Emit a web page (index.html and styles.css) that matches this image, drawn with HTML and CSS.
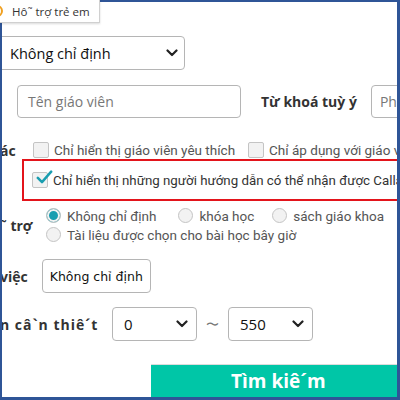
FILE: index.html
```html
<!DOCTYPE html>
<html lang="vi">
<head>
  <meta charset="UTF-8">
  <meta name="viewport" content="width=device-width, initial-scale=1.0">
  <title>Tìm kiếm giáo viên</title>
  <link rel="stylesheet" href="styles.css">
</head>
<body>

  <div class="frame">

    <!-- Tab -->
    <div class="tab"><span class="tab-dot"></span>Hô˜ trợ trẻ em</div>

    <!-- Main select -->
    <div class="row row-main">
      <div class="select select-main">
        <span>Không chỉ định</span>
        <svg class="chev" viewBox="0 0 12 8"><path d="M1.5 1.5 L6 6 L10.5 1.5" /></svg>
      </div>
    </div>

    <!-- Teacher name / keyword -->
    <div class="row row-teacher">
      <div class="input input-teacher">Tên giáo viên</div>
      <span class="lbl lbl-keyword">Từ khoá tuỳ ý</span>
      <div class="input input-keyword">Phi</div>
    </div>

    <!-- Other options -->
    <div class="row row-check">
      <span class="lbl lbl-other">ác</span>
      <label class="check"><span class="box"></span>Chỉ hiển thị giáo viên yêu thích</label>
      <label class="check check-2"><span class="box"></span>Chỉ áp dụng với giáo viên</label>
    </div>

    <div class="row row-highlight">
      <div class="highlight">
        <label class="check check-on"><span class="box">
          <svg class="tick" viewBox="0 0 20 18"><path d="M2 9.5 L7 14.5 L18 2" /></svg>
        </span>Chỉ hiển thị những người hướng dẫn có thể nhận được Callan</label>
      </div>
    </div>

    <!-- Support material -->
    <div class="row row-radio">
      <span class="lbl lbl-support">˜ trợ</span>
      <div class="radios">
        <div class="radio-line">
          <label class="radio radio-on"><span class="dot"></span>Không chỉ định</label>
          <label class="radio radio-2"><span class="dot"></span>khóa học</label>
          <label class="radio radio-3"><span class="dot"></span>sách giáo khoa</label>
        </div>
        <div class="radio-line">
          <label class="radio"><span class="dot"></span>Tài liệu được chọn cho bài học bây giờ</label>
        </div>
      </div>
    </div>

    <!-- Job -->
    <div class="row row-job">
      <span class="lbl">việc</span>
      <div class="input input-job">Không chỉ định</div>
    </div>

    <!-- Range -->
    <div class="row row-range">
      <span class="lbl lbl-range">n câ`n thiê´t</span>
      <div class="select select-small select-from">
        <span>0</span>
        <svg class="chev" viewBox="0 0 12 8"><path d="M1.5 1.5 L6 6 L10.5 1.5" /></svg>
      </div>
      <span class="tilde">〜</span>
      <div class="select select-small">
        <span>550</span>
        <svg class="chev" viewBox="0 0 12 8"><path d="M1.5 1.5 L6 6 L10.5 1.5" /></svg>
      </div>
    </div>

    <!-- Submit -->
    <div class="row row-submit">
      <button class="btn-search">Tìm kiê´m</button>
    </div>

  </div>

</body>
</html>
```

FILE: styles.css
```css
* { box-sizing: border-box; margin: 0; padding: 0; }

body {
  font-family: "Open Sans", "Noto Sans", sans-serif;
  color: #333;
  background: #fff;
}

.frame {
  position: relative;
  width: 400px;
  height: 400px;
  overflow: hidden;
  background: #fff;
}
/* blue outline drawn over the cropped page */
.frame::after {
  content: "";
  position: absolute;
  inset: 0;
  border-style: solid;
  border-color: #2f5597;
  border-width: 2px 3px 3px 2px;
  pointer-events: none;
  z-index: 1;
}

.row { display: flex; align-items: center; }
.row > * { flex-shrink: 0; }

/* — TAB ————————————— */
.tab {
  position: relative;
  z-index: 2;
  display: flex;
  align-items: center;
  width: 100px;
  height: 23px;
  padding-left: 12px;
  font-size: 11.5px;
  color: #333;
  background: #fff;
  border: 1px solid #d0d0d0;
  border-top: none;
  border-left: none;
  box-shadow: 0 1px 2px rgba(0,0,0,0.15);
}
.tab-dot {
  position: absolute;
  left: -9px;
  top: 5px;
  width: 12px;
  height: 12px;
  border: 2px solid #f0a020;
  border-radius: 50%;
}

/* — CONTROLS ————————————— */
.select, .input {
  display: flex;
  align-items: center;
  height: 34px;
  border: 1px solid #b5b5b5;
  border-radius: 4px;
  background: #fff;
  font-size: 14px;
  color: #111;
}
.select { justify-content: space-between; }
.chev { width: 12px; height: 8px; }
.chev path { fill: none; stroke: #222; stroke-width: 2.2; stroke-linecap: round; stroke-linejoin: round; }

.row-main { margin-top: 13px; }
.select-main {
  margin-left: -20px;
  width: 205px;
  padding: 0 6px 0 29px;
  font-size: 14.5px;
}

.row-teacher { margin-top: 15px; }
.input-teacher {
  margin-left: 17px;
  width: 224px;
  height: 33px;
  padding-left: 10px;
  color: #777;
}
.input-keyword {
  width: 80px;
  height: 33px;
  padding-left: 8px;
  color: #777;
}

.lbl {
  font-size: 14px;
  font-weight: 700;
  color: #333;
  white-space: nowrap;
}
.lbl-keyword { margin: 0 14px 0 20px; }

/* — CHECKBOXES ————————————— */
.row-check { margin-top: 24px; height: 16px; }
.lbl-other { width: 33px; }

.check {
  display: flex;
  align-items: center;
  font-family: Roboto, sans-serif;
  font-size: 13.5px;
  color: #555;
  white-space: nowrap;
}
.check .box {
  position: relative;
  width: 16px;
  height: 16px;
  margin-right: 5px;
  border: 1px solid #c4c4c4;
  border-radius: 2px;
  background: #f2f2f2;
  flex-shrink: 0;
}
.check-2 { margin-left: 13px; }

.row-highlight { margin-top: 1px; }
.highlight {
  display: flex;
  align-items: center;
  margin-left: 22px;
  width: 440px;
  height: 42px;
  padding-left: 8px;
  border: 2px solid #e3141b;
  border-right: none;
}
.check-on { color: #333; font-size: 13.3px; }
.tick {
  position: absolute;
  left: 3px;
  top: -3px;
  width: 17px;
  height: 15px;
}
.tick path { fill: none; stroke: #1a9eb0; stroke-width: 3; stroke-linecap: round; stroke-linejoin: round; }

/* — RADIOS ————————————— */
.row-radio { margin-top: 5px; }
.lbl-support { width: 46px; }
.radio-line { display: flex; height: 19px; align-items: center; }
.radio {
  display: flex;
  align-items: center;
  font-family: Roboto, sans-serif;
  font-size: 13.5px;
  color: #555;
  white-space: nowrap;
}
.radio .dot {
  width: 15px;
  height: 15px;
  margin-right: 6px;
  border: 1px solid #c4c4c4;
  border-radius: 50%;
  background: #f2f2f2;
}
.radio-on .dot {
  background: #1a9eb0;
  box-shadow: inset 0 0 0 2px #f2f2f2;
}
.radio-2 { margin-left: 22px; }
.radio-3 { margin-left: 18px; }

/* — JOB / RANGE ————————————— */
.row-job { margin-top: 15px; }
.input-job {
  margin-left: 14px;
  width: 109px;
  padding-left: 7px;
  font-family: "DejaVu Sans", sans-serif;
  font-size: 12.5px;
}

.row-range { margin-top: 14px; }
.lbl-range { width: 100px; letter-spacing: 1px; }
.select-small {
  width: 85px;
  padding: 0 8px 0 11px;
  font-size: 15px;
}
.select-from { margin-left: 12px; }
.tilde { width: 31px; text-align: center; color: #777; font-size: 13px; }

/* — SUBMIT ————————————— */
.row-submit { margin-top: 24px; }
.btn-search {
  margin-left: 151px;
  width: 250px;
  height: 36px;
  padding: 0 0 4px 80px;
  border: none;
  background: #00c6a7;
  box-shadow: 0 -1px 0 #dcdcdc;
  color: #fff;
  font-family: "Open Sans", sans-serif;
  font-size: 19px;
  font-weight: 700;
  text-align: left;
}
```
